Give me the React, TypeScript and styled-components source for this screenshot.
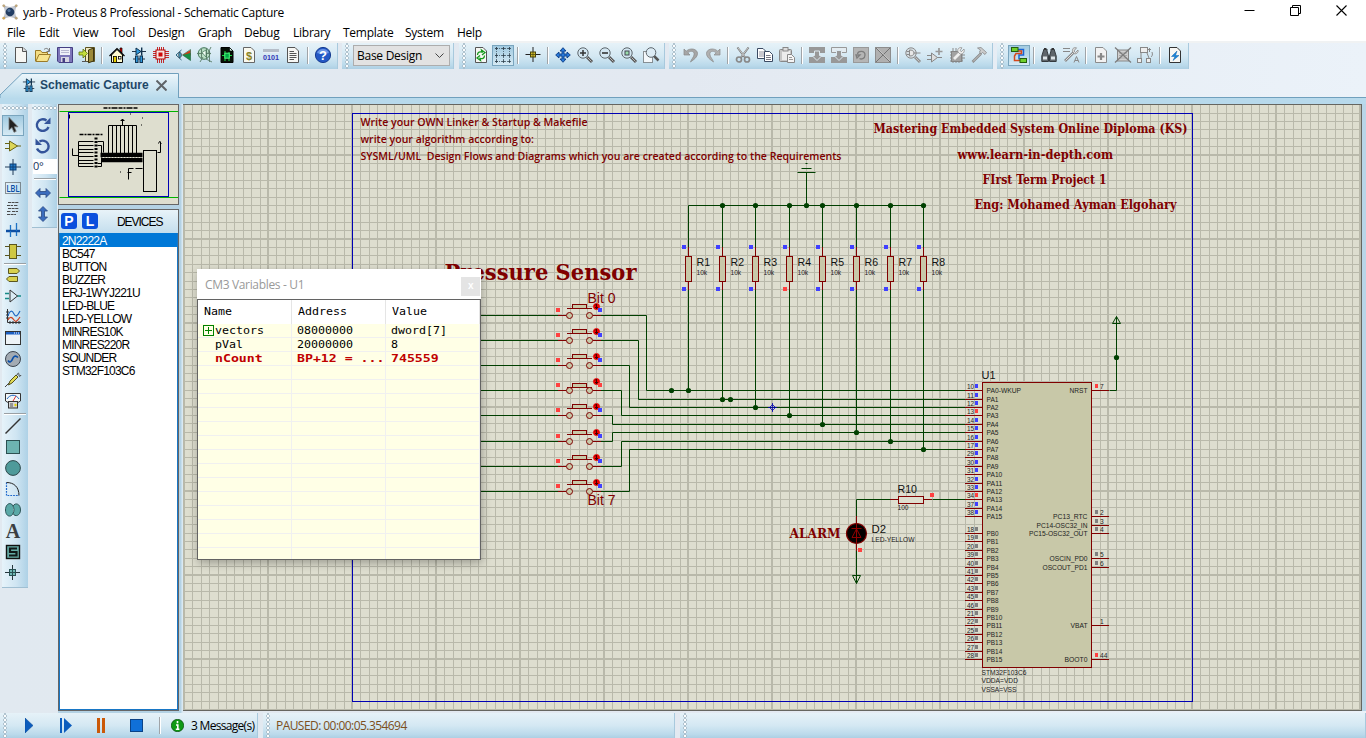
import React from 'react';
import styled, { createGlobalStyle, css } from 'styled-components';

const GlobalStyle = createGlobalStyle`
  * { box-sizing: border-box; }
  html, body { margin: 0; padding: 0; overflow: hidden; background: #fff; }
  body { font-family: "Open Sans", "Noto Sans", sans-serif; font-size: 12px; color: #000; }
  svg { display: block; }
`;

/* ---------- icons ---------- */

const lens = (extra: React.ReactNode, grey = false) => (
  <>
    <path d="M10 10L15 15" stroke={grey ? '#8f8f8f' : '#555'} strokeWidth="3" />
    <path d="M10.5 10.5L14.5 14.5" stroke={grey ? '#c4c4c4' : '#bbb'} strokeWidth="1" />
    <circle cx="6" cy="6" r="5.2" fill={grey ? '#d5dde2' : '#d3e6f1'} stroke={grey ? '#8c8c8c' : '#5d666c'} />
    {extra}
  </>
);

const page = (stroke = '#555', fill = '#f7f7f4') => (
  <path d="M2.500 .5H10L13.500 4V15.500H2.500Z" fill={fill} stroke={stroke} />
);

const ICONS: Record<string, React.ReactNode> = {
  new: <>{page()}<path d="M9.500 .5V4.500H13.500" fill="#ddd" stroke="#555" /></>,
  open: <>
    <path d="M.5 14V3.500H5.500L7 5.500H12.500V8" fill="#f3dd84" stroke="#9a7a28" />
    <path d="M.8 14.500L4 7.500H15.500L12.500 14.500Z" fill="#f7e48e" stroke="#9a7a28" />
    <path d="M9 2.500C11 .8 13 1 14 4M14.500 1V4.500H11.500" fill="none" stroke="#777" />
  </>,
  save: <>
    <path d="M.5 .5H15.500V15.500H2L.5 14Z" fill="#7d76b9" stroke="#453f83" />
    <rect x="3" y="1" width="10" height="7" fill="#eef0f8" /><path d="M4 3.500H12M4 5.500H12" stroke="#b8b8d0" />
    <rect x="4" y="10" width="8" height="5" fill="#d6d6e2" /><rect x="5.500" y="11" width="2.500" height="4" fill="#453f83" />
  </>,
  exit: <>
    <path d="M6.500 .5H15.500V14.500H6.500Z" fill="#f1e9bf" stroke="#5d5321" />
    <path d="M9.500 3L14.500 1V14L9.500 15.800Z" fill="#9b8a3a" stroke="#3e3612" />
    <path d="M0 5H4V2L8.500 6.500L4 11V8H0Z" fill="#c3dd3c" stroke="#5d7410" strokeWidth=".8" />
    <path d="M3 14.500H8" stroke="#555" />
  </>,
  home: <>
    <path d="M2.500 8V15.500H13.500V8L8 2.500Z" fill="#fffbd0" stroke="#000" />
    <path d="M11 1V4L13 6V1Z" fill="#d00" stroke="#000" strokeWidth=".7" />
    <path d="M.5 9L8 1.500L15.500 9" fill="none" stroke="#000" strokeWidth="1.200" />
    <rect x="4.500" y="9.500" width="3" height="6" fill="#e8d000" stroke="#000" strokeWidth=".8" /><rect x="9.500" y="9.500" width="2.500" height="2.500" fill="#fff" stroke="#000" strokeWidth=".8" />
  </>,
  schem: <>
    <path d="M1 4.500H15M2 12H14" stroke="#22364a" />
    <path d="M5 1L10 4.500L5 8Z" fill="#2e9ae0" stroke="#10314d" /><path d="M10.700 .5V8.500" stroke="#10314d" strokeWidth="1.400" />
    <rect x="4.500" y="9" width="2.500" height="6.500" fill="#2e9ae0" stroke="#10314d" /><rect x="9" y="9" width="2.500" height="6.500" fill="#2e9ae0" stroke="#10314d" />
  </>,
  chip: <>
    <path d="M4.500 0V16M6.500 0V16M8.500 0V16M10.500 0V16M0 4.500H16M0 6.500H16M0 8.500H16M0 10.500H16" stroke="#c01515" strokeWidth=".9" />
    <rect x="3" y="3" width="9" height="9" fill="#f4e3e0" stroke="#b00" /><rect x="5.500" y="5.500" width="4" height="4" fill="#d00808" />
  </>,
  view3d: <>
    <path d="M6.500 3L1 8L6.500 13" fill="none" stroke="#29627a" /><path d="M4.500 5C7 6 7 10 4.500 11C3.500 10 3.500 6 4.500 5" fill="#49a7c7" stroke="#223" strokeWidth=".7" />
    <path d="M7.500 8L15.500 3V8.500Z" fill="#d63a16" /><path d="M7.500 8L15.500 6V13.500Z" fill="#179046" /><path d="M7.500 8L15.500 2.500V13.500Z" fill="none" stroke="#1b5b38" strokeWidth=".6" />
  </>,
  gerber: <>
    <circle cx="7" cy="6.500" r="5.800" fill="#b8dec4" stroke="#3f7355" />
    <path d="M0 6.500H14M4.500 2V11M9.500 1V12M3 15L6 10M14 0L11 6M12.500 4V15M9 12L15 15" stroke="#587a65" fill="none" strokeWidth=".9" />
    <path d="M5 5.500L9 3V10Z" fill="#f3fff6" stroke="#3f7355" strokeWidth=".7" />
  </>,
  explorer: <>
    <path d="M2 .5H10.500L14 4V15.500H2Z" fill="#061006" stroke="#000" /><path d="M10.500 .5V4H14Z" fill="#dfe" stroke="#000" strokeWidth=".7" />
    <path d="M3 8.500H13M6 4V14M10 5V14" stroke="#15dd42" /><rect x="5.800" y="6.200" width="4.500" height="5" fill="#0a4" stroke="#4df07a" />
  </>,
  bom: <>{page('#666', '#faf9ef')}<text x="8" y="12.500" fontFamily="Liberation Sans, sans-serif" fontSize="11" fontWeight="bold" fill="#878223" textAnchor="middle">$</text></>,
  code: <>
    <rect x="0" y="2" width="16" height="3" fill="#b5bdc8" /><path d="M0 5.500H16" stroke="#e8edf4" />
    <text x="0" y="13" fontFamily="Liberation Sans, sans-serif" fontSize="7" fontWeight="bold" fill="#3535b5" textLength="16" lengthAdjust="spacingAndGlyphs">0101</text>
  </>,
  notes: <>{page()}<path d="M4.500 4.500H9M4.500 6.500H11.500M4.500 8.500H11.500M4.500 10.500H11.500M4.500 12.500H9" stroke="#555" /></>,
  help: <>
    <circle cx="8" cy="8" r="7.600" fill="#2458c5" stroke="#163c91" /><path d="M2 6A6.500 6.500 0 0 1 14 6Q8 8 2 6" fill="#6d96e6" />
    <text x="8" y="12.800" fontFamily="Liberation Sans, sans-serif" fontSize="13" fontWeight="bold" fill="#fff" textAnchor="middle">?</text>
  </>,
  refresh: <>{page()}<path d="M4.500 8C4.500 5 7 4.500 9 5L8.500 3L12 5.500L9 8M11.500 8.500C11.500 11.500 9 12 7 11.500L7.500 13.500L4 11L7 8.500" fill="none" stroke="#159a1f" strokeWidth="1.300" /></>,
  grid: (
    <>
      <path d="M1.500 0V16M8.500 0V16M14.500 0V16M0 1.500H16M0 8.500H16M0 14.500H16" stroke="#31434f" strokeDasharray="1 1" strokeWidth=".7" />
      <path d="M0 1.500H3M1.500 0V3M7 1.500H10M8.500 0V3M13 1.500H16M14.500 0V3M0 8.500H3M1.500 7V10M7 8.500H10M8.500 7V10M13 8.500H16M14.500 7V10M0 14.500H3M1.500 13V16M7 14.500H10M8.500 13V16M13 14.500H16M14.500 13V16" stroke="#31434f" strokeWidth=".8" />
    </>
  ),
  origin: <><path d="M.5 7.500H15.500M8 0V15" stroke="#222" /><rect x="5.500" y="5" width="5" height="5" fill="#d1bd2b" stroke="#4b450c" /><path d="M5.500 7.500H10.500M8 5V10" stroke="#4b450c" strokeWidth=".7" /></>,
  pan: <path d="M8 .7L11 4H9V7H12V5L15.300 8L12 11V9H9V12H11L8 15.300L5 12H7V9H4V11L.7 8L4 5V7H7V4H5Z" fill="#2878d8" stroke="#0a3c86" strokeWidth=".9" />,
  zin: lens(<path d="M3 6H9M6 3V9" stroke="#333" strokeWidth="1.500" />),
  zout: lens(<path d="M3 6H9" stroke="#333" strokeWidth="1.600" />),
  zall: lens(<rect x="4" y="4" width="4" height="4" fill="#9da" stroke="#445" />),
  zarea: <><rect x=".5" y="4.500" width="9" height="11" fill="#f4f8fb" stroke="#333" strokeDasharray="1 1" /><path d="M11 9L15.500 13.500" stroke="#555" strokeWidth="2.500" /><circle cx="8" cy="5.500" r="4.800" fill="#dcebf4" stroke="#5d666c" /></>,
  undo: <path d="M1 2V8H7L4.800 5.800C8 3 12 4.500 11 8C10.500 10.500 8.500 12 7.500 15C11 12.500 14.500 10 14.500 6.500C14.500 2 7.500 .2 3.200 4.200Z" fill="#a6a6a6" stroke="#868686" strokeWidth=".7" />,
  redo: <path d="M15 2V8H9L11.200 5.800C8 3 4 4.500 5 8C5.500 10.500 7.500 12 8.500 15C5 12.500 1.500 10 1.500 6.500C1.500 2 8.500 .2 12.800 4.200Z" fill="#b0b0b0" stroke="#8b8b8b" strokeWidth=".7" />,
  cut: <><path d="M2.500 .5L10 10.500M13.500 .5L6 10.500" stroke="#777" strokeWidth="2" /><path d="M3 1L9.500 9.500M13 1L6.500 9.500" stroke="#ddd" strokeWidth=".8" /><circle cx="4" cy="12.500" r="2.500" fill="none" stroke="#888" strokeWidth="1.700" /><circle cx="12" cy="12.500" r="2.500" fill="none" stroke="#888" strokeWidth="1.700" /></>,
  copy: <><path d="M.5 1.500H6L8.500 4V11.500H.5Z" fill="#fff" stroke="#3b4a63" /><path d="M2 5H7M2 7H7M2 9H7" stroke="#778" strokeWidth=".8" /><path d="M7.500 4.500H12.500L15.500 7.500V14.500H7.500Z" fill="#fff" stroke="#3b4a63" /><path d="M9 8.500H13.500M9 10.500H14M9 12.500H14" stroke="#556" strokeWidth=".8" /></>,
  paste: <><rect x=".5" y="2.500" width="12" height="12" rx="1" fill="#c6c6c6" stroke="#888" /><rect x="3" y="4" width="8" height="9" fill="#ececec" /><rect x="4" y=".5" width="5" height="3.500" fill="#ddd" stroke="#888" /><path d="M8.500 7.500H12.500L15.500 10.500V15.500H8.500Z" fill="#f5f5f5" stroke="#888" /><path d="M10 10.500H13M10 12.500H14" stroke="#999" /></>,
  blockCopy: <><path d="M0 0H16V6H0ZM0 10H16V16H0Z" fill="#989898" /><path d="M5.500 4V8.500H3L8 13.500L13 8.500H10.500V4Z" fill="#989898" stroke="#dde9f0" /></>,
  blockMove: <><path d="M.5 .5H15.500V5.500H.5Z" fill="#e4ecf1" stroke="#999" /><path d="M0 10H16V16H0Z" fill="#989898" /><path d="M5.500 3.500V8.500H3L8 13.500L13 8.500H10.500V3.500Z" fill="#989898" stroke="#dde9f0" /></>,
  blockRotate: <><rect x=".5" y=".5" width="15" height="15" fill="#b5b5b5" stroke="#999" /><path d="M3 8H7L4 11ZM4.500 7C5 3.500 12 3 12 8C12 12 8 12.500 6.500 11.500" fill="none" stroke="#7d7d7d" strokeWidth="1.300" /></>,
  blockDelete: <><rect x=".5" y=".5" width="15" height="15" fill="#b0b0b0" stroke="#8d8d8d" /><path d="M1 1L15 15M15 1L1 15" stroke="#737373" /><path d="M2 1L15 14" stroke="#ddd" strokeWidth=".5" /></>,
  pick: lens(<><path d="M1.500 4.500H5M1.500 7.500H5M9 6H15.500" stroke="#8a8a8a" /><path d="M4.500 3V9C7 9 9 8 9 6S7 3 4.500 3Z" fill="#e8e8e8" stroke="#8a8a8a" /></>, true),
  makeDev: <><path d="M0 8.500H4M0 12.500H4M10 10.500H15" stroke="#888" /><path d="M4.500 6V15L10.500 10.500Z" fill="#ddd" stroke="#888" /><path d="M12 1V8M8.500 4.500H15.500" stroke="#999" strokeWidth="1.700" /></>,
  packTool: <><path d="M4 1V16M7 1V16M10 5V16M13 5V14M1 5H14M1 8H16M1 11H16M1 14H14" stroke="#8a8a8a" /><rect x="2.500" y="4.500" width="10" height="10" fill="#a2a2a2" stroke="#858585" /><path d="M5 12L12 5" stroke="#eee" strokeWidth="2.800" /><path d="M15 2L12.500 4.500L11 3.500L13 .8C10 0 8 2 9 5L11 7C14 7.500 16 5 15 2Z" fill="#eee" stroke="#888" strokeWidth=".7" /></>,
  hammer: <><path d="M1.500 15L10 6.500" stroke="#888" strokeWidth="2.500" /><path d="M2 14.500L9.500 7" stroke="#ddd" strokeWidth=".8" /><path d="M6.500 1L10 .5L15.500 5.500L14 7.500L11.500 5.500L10 7L8.500 5L9.500 3Z" fill="#ccc" stroke="#888" strokeWidth=".8" /></>,
  autoroute: <>
    <path d="M7 2.500H12.500V8H8V12.500" fill="none" stroke="#1965d6" strokeWidth="1.500" /><path d="M7 4H10.500V6.500H5L3.500 9V13.500H9" fill="none" stroke="#d6471a" strokeWidth="1.500" />
    <rect x=".5" y=".5" width="6.500" height="4" fill="#6fd02c" stroke="#235c0c" /><rect x="9" y="11.500" width="6.500" height="4" fill="#6fd02c" stroke="#235c0c" />
  </>,
  find: <><path d="M3 2H6V4L7.500 9V14.500H.8V9ZM13 2H10V4L8.500 9V14.500H15.200V9Z" fill="#5f666b" stroke="#343a3e" /><path d="M2 11H6M10 11H14" stroke="#dce4e8" strokeWidth="3" /><path d="M4 1V3M12 1V3" stroke="#333" strokeWidth="2" /></>,
  property: <><path d="M0 1.500H7M0 4.500H7" stroke="#888" /><path d="M2 14L11 5" stroke="#888" strokeWidth="2.600" /><path d="M2.500 13.500L11 5" stroke="#e8e8e8" strokeWidth=".9" /><path d="M15 3L12.500 5.500L11 4L13.500 .8C10.500 0 9 2 9.500 4.500L11.500 7C14 7 15.800 5 15 3Z" fill="#ddd" stroke="#888" strokeWidth=".8" /><path d="M11 15.500L13.500 9.500L16 15.500M12 13.500H15.200" fill="none" stroke="#888" /></>,
  addSheet: <>{page('#8b8b8b', '#f2f2f2')}<path d="M8 6V13M4.500 9.500H11.500" stroke="#888" strokeWidth="2.200" /></>,
  removeSheet: <><rect x="2.500" y="3" width="11" height="11" fill="#cfcfcf" stroke="#888" /><path d="M4 6H12M4 8.500H12M4 11H12" stroke="#aaa" /><path d="M0 .5L16 15.500M16 .5L0 15.500" stroke="#7d7d7d" strokeWidth="1.300" /></>,
  childSheet: <><path d="M4 5V11M10 6L12 11" stroke="#888" /><rect x="3.500" y=".5" width="7" height="5" fill="#eee" stroke="#888" /><rect x=".5" y="11.500" width="4" height="4" fill="#eee" stroke="#888" /><rect x="9.500" y="11.500" width="4" height="4" fill="#eee" stroke="#888" /><path d="M11 2.500H14M12.500 1V5M15 5C16 8 15 9 14 10" stroke="#888" fill="none" /></>,
  erc: <>{page('#333')}<path d="M10 4L4.500 9.500H8L6 13.500L12 8.500H8.500Z" fill="#1685dd" stroke="#1464a8" strokeWidth=".5" /></>,
  arrow: <path d="M4 .5V13L7 10.500L9 15.300L11.200 14.300L9.200 9.800H13Z" fill="#222" stroke="#777" strokeWidth=".8" />,
  gate: <><path d="M0 5.500H5M0 10.500H5M12 8H16" stroke="#6a6517" /><path d="M4.500 3V13L12.500 8Z" fill="#ddd657" stroke="#6a6517" /></>,
  junction: <><path d="M8 0V16M0 8H16" stroke="#223c58" /><rect x="5" y="5" width="6" height="6" fill="#237dcc" stroke="#0c3e75" /><path d="M8 5V11M5 8H11" stroke="#0c3e75" /></>,
  lbl: <><rect x=".5" y="2.500" width="15" height="11" fill="none" stroke="#333" strokeDasharray="1 1" /><text x="1.500" y="11.800" fontSize="9.500" fontFamily="Roboto, sans-serif" fontWeight="500" fill="#0a4ea5" textLength="13" lengthAdjust="spacingAndGlyphs">LBL</text></>,
  script: <path d="M3 1.500H14M2 4.500H8M9 4.500H13M3 7.500H14M2 10.500H6M7 10.500H13M2 13.500H11" stroke="#4b4b4b" strokeDasharray="3 .6" />,
  bus: <><path d="M1 9H15" stroke="#0d4fa3" strokeWidth="2.500" /><path d="M5.500 9V15M5.500 3V8M11.500 1V9M11.500 10V14" stroke="#1d72c4" strokeWidth="1.300" /></>,
  subckt: <><path d="M0 3.500H5M0 12.500H5M11 3.500H16M11 12.500H16" stroke="#5a5620" /><rect x="4.500" y="1.500" width="7" height="14" fill="#cfc843" stroke="#5a5620" /></>,
  terminal: <><path d="M3.500 1.500H12L14.500 4L12 6.500H3.500Z" fill="#d8d14c" stroke="#5a5620" /><path d="M12.500 9.500H4L1.500 12L4 14.500H12.500Z" fill="#d8d14c" stroke="#5a5620" /></>,
  pin: <><path d="M0 5.500H4M0 10.500H4M12 8H16" stroke="#178a86" strokeWidth="1.400" /><path d="M5 2V14L12.500 8Z" fill="#dcecf5" stroke="#333" /></>,
  graph: <><path d="M2.500 0V13.500H16M1 3H4M1 6H4M1 9H4M5 12V15M8 12V15M11 12V15M14 12V15" stroke="#333" fill="none" /><path d="M3 7C5 1 7 1 9 5S13 6 15 2" stroke="#1f68c2" fill="none" strokeWidth="1.200" /><path d="M3 11C5 7 7 8 9 11S13 11 15 8" stroke="#d0401c" fill="none" strokeWidth="1.200" /></>,
  popup: <><rect x=".5" y="1.500" width="15" height="13" fill="#eef3f6" stroke="#333" /><rect x="1" y="2" width="14" height="2.500" fill="#1c5fc2" /><path d="M9 3H10M11 3H12M13 3H14" stroke="#fff" /></>,
  generator: <><circle cx="8" cy="8" r="7.500" fill="#a3abb3" stroke="#3d4650" /><path d="M3 9.500C4.500 12 6.500 11 7.500 8S10.500 4 13 6.500" fill="none" stroke="#0a4fa8" strokeWidth="1.700" /></>,
  probe: <><path d="M0 15L4 11M12 3C13 0 14 1 14 3S15 5 16 3" fill="none" stroke="#444" /><path d="M3.500 13L5 9L11 3L13 5L7 11Z" fill="#e2db55" stroke="#55511c" /></>,
  meter: <><path d="M.5 .5H15.500V8L12 10H4L.5 8Z" fill="#f2f6f8" stroke="#333" /><path d="M2 6C5 1 11 1 14 6" fill="none" stroke="#1f68c2" /><path d="M8 8L11 3" stroke="#d33" /><rect x="3.500" y="8.500" width="9" height="6.500" fill="#d6d6d6" stroke="#333" /><circle cx="10.500" cy="12" r="1.200" fill="#e5d400" /><path d="M5 11H8M5 13H8" stroke="#555" /></>,
  line: <path d="M.5 15.500L15.500 .5" stroke="#333" strokeWidth="1.500" />,
  box: <rect x="1.500" y="1.500" width="13" height="13" fill="#6db3b1" stroke="#2c5052" />,
  circle: <circle cx="8" cy="8" r="7.400" fill="#4e9a9a" stroke="#2f4a4c" />,
  arc: <><path d="M1.500 1.500V14.500H14" fill="none" stroke="#1e68cb" strokeDasharray="1.800 1" strokeWidth="1.200" /><path d="M1.500 1.500C9 1.500 14 6 14 14.500" fill="none" stroke="#222" /></>,
  path: <path d="M8 4C6 -.5 .5 1.500 .5 8C.5 14.500 6 16 8 11.500C10 15.500 15.500 13.500 15.500 8C15.500 2 10.500 0 8 4C9.300 6 9.300 9.500 8 11.500" fill="#5ba9a7" stroke="#2f5557" />,
  text: <text x="8" y="14.500" fontFamily="Liberation Serif, serif" fontWeight="bold" fontSize="20" textAnchor="middle" fill="#3a3f42">A</text>,
  symbol: <><rect x="1.500" y="1.500" width="13" height="13" fill="#64aaa5" stroke="#111" strokeWidth="1.400" /><path d="M12 4.500H5V8H11.500V11.500H4" fill="none" stroke="#101818" strokeWidth="2.200" /></>,
  marker: <><path d="M7.500 0V15M0 7.500H15" stroke="#26363c" /><rect x="4.500" y="4.500" width="6" height="6" fill="#6fb9b5" stroke="#285052" /><path d="M7.500 4.500V10.500M4.500 7.500H10.500" stroke="#285052" /></>,
  cw: <><path d="M13.500 10A6 5.800 0 1 1 11.500 3.500" fill="none" stroke="#34549a" strokeWidth="2.400" /><path d="M15.500 .5V7H9Z" fill="#34549a" /></>,
  ccw: <><path d="M2 10.500A6 5.800 0 1 0 4.500 3.500" fill="none" stroke="#34549a" strokeWidth="2.400" /><path d="M.5 .5V7H7Z" fill="#34549a" /></>,
  flipH: <path d="M.5 8L5 3.500V6.500H11V3.500L15.500 8L11 12.500V9.500H5V12.500Z" fill="#3a6cbd" stroke="#2a4780" strokeWidth=".8" />,
  flipV: <path d="M8 .5L3.500 5H6.500V11H3.500L8 15.500L12.500 11H9.500V5H12.500Z" fill="#3a6cbd" stroke="#2a4780" strokeWidth=".8" />,
};

const Icon = ({ name, size = 16 }: { name: string; size?: number }) => (
  <svg width={size} height={size} viewBox="0 0 16 16" overflow="visible">{ICONS[name]}</svg>
);

/* ---------- frame ---------- */

const Frame = styled.div`
  width: 1366px;
  height: 738px;
  display: flex;
  flex-direction: column;
  background: linear-gradient(90deg, #e1e9f0, #e3e9f1 50%, #ebf2f9);
`;

const TitleBar = styled.header`
  height: 23px;
  display: flex;
  align-items: center;
  padding-left: 2px;
  background: #fff;
`;
const TitleText = styled.span`
  margin-left: 5px;
  padding-top: 1px;
  flex: 1;
  letter-spacing: -0.3px;
  white-space: pre;
`;
const WindowButtons = styled.div`
  display: flex;
  gap: 35px;
  padding-right: 19px;
  padding-bottom: 2px;
`;

const MenuBar = styled.nav`
  height: 20px;
  display: flex;
  padding-left: 7px;
  line-height: 19px;
  background: #fff;
  border-bottom: 2px solid #f0f2f3;
`;
const MenuItem = styled.span<{ $w: number }>`
  width: ${p => p.$w}px;
  letter-spacing: -0.25px;
`;

const toolbarFill = 'linear-gradient(#e6f2f8, #d4e8f3 50%, #bbdaeb 85%, #adcfe3)';

const ToolbarRow = styled.div`
  height: 26px;
  display: flex;
`;
const ToolGroup = styled.div<{ $w: number; $gap: number; $pad: number }>`
  width: ${p => p.$w}px;
  margin-right: ${p => p.$gap}px;
  padding-left: ${p => p.$pad}px;
  padding-bottom: 1px;
  display: flex;
  align-items: center;
  background:
    radial-gradient(circle at 2px 2px, #fbfdfe 1px, #a9bcc8 1.5px, transparent 2px) 3px 1px / 4px 4px repeat-y,
    ${toolbarFill};
  border-right: 1px solid #a8c9dd;
`;
const ToolButton = styled.span<{ $on?: boolean }>`
  width: 22px;
  height: 21px;
  flex: none;
  display: flex;
  align-items: center;
  justify-content: center;
  padding-bottom: 1px;
  ${p => p.$on && css`
    background: linear-gradient(#9fc9e0, #d8ebf5);
    box-shadow: inset 0 0 0 1px #7aa5be;
  `}
`;
const Divider = styled.span`
  width: 8px;
  height: 17px;
  flex: none;
  display: flex;
  justify-content: center;
  &::after { content: ''; width: 2px; background: linear-gradient(90deg, #a0a4a8 50%, #fff 50%); }
`;
const DesignSelect = styled.div`
  width: 97px;
  height: 21px;
  padding: 0 5px 0 3px;
  display: flex;
  align-items: center;
  justify-content: space-between;
  background: #e2e2e2;
  border: 1px solid #adadad;
  letter-spacing: -0.27px;
`;

const TabRow = styled.div`
  height: 29px;
  flex: none;
  display: flex;
  align-items: flex-end;
`;
const TabFill = styled.div`
  flex: 1;
  height: 1px;
  background: #70a0bd;
`;
const Tab = styled.div`
  width: 179px;
  height: 25px;
  flex: none;
  position: relative;
  z-index: 0;
  display: flex;
  align-items: center;
  padding-left: 22px;
  padding-bottom: 1px;
`;
const TabName = styled.span`
  width: 116px;
  margin-left: 4px;
  color: #1f4768;
  font: bold 12px "Liberation Sans", Arial, sans-serif;
  white-space: nowrap;
`;
const TabShape = styled.svg`
  position: absolute;
  left: 0;
  top: 0;
  z-index: -1;
`;
const Strip = styled.div`
  height: 6px;
  flex: none;
  background: #b8daec;
`;

/* ---------- workspace ---------- */

const Workspace = styled.main`
  height: 609px;
  display: flex;
  align-items: flex-start;
`;
const VerticalTools = styled.aside<{ $h: number; $w: number; $ml: number }>`
  width: ${p => p.$w}px;
  height: ${p => p.$h}px;
  margin-left: ${p => p.$ml}px;
  flex: none;
  padding-top: 11px;
  background:
    radial-gradient(circle at 2px 2px, #fbfdfe 1px, #a9bcc8 1.5px, transparent 2px) 1px 2px / 4px 4px repeat-x,
    linear-gradient(90deg, #e6f3fa, #cfe5f2 55%, #aed1e6);
  border-bottom: 1px solid #a0bfd2;
`;
const VDivider = styled.div<{ $h: number }>`
  height: ${p => p.$h}px;
  width: 22px;
  margin-left: 2px;
  display: flex;
  align-items: center;
  &::after { content: ''; flex: 1; height: 2px; background: linear-gradient(#9aa0a4 50%, #fff 50%); }
`;
const AngleField = styled.div`
  width: 24px;
  height: 15px;
  margin: 2px 0 0 1px;
  background: #fff;
  color: #16345e;
  font-size: 11px;
  line-height: 13px;
  letter-spacing: -0.3px;
`;
const PanelColumn = styled.section`
  width: 125px;
  height: 609px;
  flex: none;
  padding-right: 4px;
  padding-bottom: 2px;
  margin-left: 1px;
  display: flex;
  flex-direction: column;
  gap: 4px;
  background: linear-gradient(90deg, #b4d2e4 98%, #e3eff6);
`;
const Overview = styled.div`
  height: 101px;
  border: 1px solid #666;
  background: #dedecf;
`;
const Devices = styled.div`
  flex: 1;
  border: 1px solid #666;
  display: flex;
  flex-direction: column;
`;
const DevicesHead = styled.div`
  height: 23px;
  display: flex;
  align-items: center;
  padding: 0 0 1px 2px;
  gap: 5px;
  background: linear-gradient(#e8f3f9, #c4deed);
`;
const LetterButton = styled.span`
  width: 16px;
  height: 16px;
  border-radius: 3px;
  background: #0a4fdd;
  color: #fff;
  font: bold 14px/16px "Liberation Sans", Arial, sans-serif;
  text-align: center;
`;
const DevicesTitle = styled.span`
  margin-left: 14px;
  padding-top: 1px;
  font: 12px "Liberation Sans", Arial, sans-serif;
  letter-spacing: -1.05px;
`;
const DeviceList = styled.div`
  flex: 1;
  padding-top: 1px;
  background: #fff;
  border: 1px solid #1877c6;
  border-top: 0;
  font: 12px/13px "Liberation Sans", Arial, sans-serif;
  letter-spacing: -0.8px;
`;
const Device = styled.div<{ $on: boolean }>`
  height: 13px;
  padding: 1px 0 0 2px;
  white-space: nowrap;
  ${p => p.$on && css`background: #0078d7; color: #fff; box-shadow: 0 -1px #0078d7;`}
`;
const CanvasArea = styled.section`
  width: 1179px;
  height: 607px;
  flex: none;
  position: relative;
`;
const RightEdge = styled.div`
  flex: 1;
  height: 607px;
  background: #b8d6e8;
`;

/* ---------- variables window ---------- */

const VarWindow = styled.div`
  position: absolute;
  left: 14px;
  top: 165px;
  width: 284px;
  height: 291px;
  display: flex;
  flex-direction: column;
  box-shadow: 1px 3px 9px rgba(0, 0, 0, 0.3);
`;
const VarTitle = styled.div`
  height: 30px;
  padding: 0 1px 0 8px;
  display: flex;
  align-items: center;
  justify-content: space-between;
  background: #fff;
  color: #999;
  letter-spacing: -0.34px;
`;
const VarClose = styled.span`
  width: 19px;
  height: 19px;
  margin-top: 4px;
  background: #e4e4e4;
  color: #fff;
  font: bold 10px/17px "Liberation Sans", Arial, sans-serif;
  text-align: center;
`;
const VarTable = styled.div`
  flex: 1;
  border: 1px solid #636363;
  overflow: hidden;
  background: #ffffe6;
  font-family: "DejaVu Sans Mono", monospace;
  font-size: 10px;
`;
const VarHead = styled.div`
  height: 24px;
  display: grid;
  grid-template-columns: 94px 94px 94px;
  background: #fff;
  line-height: 23px;
`;
const VarHeadCell = styled.span`
  padding-left: 6px;
  border-right: 1px solid #e5e5e5;
`;
const VarRow = styled.div<{ $changed?: boolean }>`
  height: 14px;
  display: grid;
  grid-template-columns: 94px 94px 94px;
  line-height: 13px;
  border-bottom: 1px solid #f0f0f0;
  color: ${p => (p.$changed ? '#c00000' : '#000')};
  font-weight: ${p => (p.$changed ? 'bold' : 'normal')};
`;
const VarCell = styled.span<{ $first?: boolean }>`
  display: flex;
  align-items: center;
  padding-left: ${p => (p.$first ? 17 : 5)}px;
  border-right: 1px solid #f0f0f0;
`;
const Wide = styled.span<{ $by: number }>`
  display: inline-block;
  white-space: pre;
  transform: scaleX(${p => p.$by});
  transform-origin: 0 50%;
`;
const Expand = styled.i`
  width: 11px;
  height: 11px;
  margin: 0 1px 0 -12px;
  border: 1px solid #008000;
  background: linear-gradient(#008000, #008000) center / 7px 1px no-repeat, linear-gradient(#008000, #008000) center / 1px 7px no-repeat;
`;

/* ---------- status bar ---------- */

const StatusBar = styled.footer`
  height: 25px;
  display: flex;
`;
const StatusSlot = styled.span<{ $w: number }>`
  width: ${p => p.$w}px;
  flex: none;
  display: flex;
  justify-content: center;
`;
const StatusText = styled.span<{ $c?: string; $ls: number }>`
  color: ${p => p.$c || '#000'};
  padding-top: 1px;
  white-space: nowrap;
  letter-spacing: ${p => p.$ls}px;
`;

/* ---------- schematic ---------- */

const WIRE = '#004000';
const DARK = '#800000';
const HIGH = '#ff4040';
const LOW = '#4040ff';
const IDLE = '#808080';

type LabelProps = { x: number; y: number; size: number; w?: number; color?: string; bold?: boolean; family?: string; children: string };
const SANS = '"Liberation Sans", Arial, sans-serif';
const SLAB = '"DejaVu Serif", serif';
const Label = ({ x, y, size, w, color = '#222', bold, family = SANS, children }: LabelProps) => (
  <text x={x} y={y} fontSize={size} fill={color} fontFamily={family} fontWeight={bold ? 700 : 400}
    textLength={w} lengthAdjust={w ? 'spacingAndGlyphs' : undefined} xmlSpace="preserve">{children}</text>
);

const Grid = () => {
  const lines: React.ReactNode[] = [];
  for (let i = 0; i <= 141; i++) {
    const x = Math.round(184 + i * 8.4);
    const major = i % 10 === 0;
    if (x <= 1360) lines.push(<rect key={`v${i}`} x={major ? x - 1 : x} y={105} width={major ? 2 : 1} height={605} />);
  }
  for (let i = -5; i <= 66; i++) {
    const y = Math.round(154.6 + i * 8.4);
    const major = i % 10 === 0;
    if (y > 105 && y <= 709) lines.push(<rect key={`h${i}`} x={184} y={major ? y - 1 : y} width={1177} height={major ? 2 : 1} />);
  }
  return <g fill="#b9b9aa">{lines}</g>;
};

const pinRow = (i: number) => Math.floor(390.6 + 8.4 * i);
const PA_NUMS = [10, 11, 12, 13, 14, 15, 16, 17, 29, 30, 31, 32, 33, 34, 37, 38];
const PB_NUMS = [18, 19, 20, 39, 40, 41, 42, 43, 45, 46, 21, 22, 25, 26, 27, 28];
const RIGHT_PINS: [number, string, string, string | null, number][] = [
  [390, 'NRST', '7', HIGH, 18], [516, 'PC13_RTC', '2', IDLE, 34.5], [525, 'PC14-OSC32_IN', '3', IDLE, 51], [533, 'PC15-OSC32_OUT', '4', IDLE, 58.5],
  [558, 'OSCIN_PD0', '5', IDLE, 38], [567, 'OSCOUT_PD1', '6', IDLE, 45], [625, 'VBAT', '1', null, 17], [659, 'BOOT0', '44', HIGH, 23],
];
const RES_X = [688, 722, 755, 789, 822, 856, 890, 923];
const BUTTONS: [number, number, number][] = [[315, 646, 390], [340, 638, 399], [365, 629, 407], [390, 621, 415], [415, 612, 424], [441, 612, 432], [466, 621, 441], [491, 629, 449]];

const Chip = () => (
  <g>
    <rect x={982.5} y={382.5} width={109} height={285} fill="#c8c8a8" stroke={DARK} />
    {[...PA_NUMS.map((n, i) => ({ n, i, name: i ? `PA${i}` : 'PA0-WKUP', c: i === 3 || i === 13 ? HIGH : LOW })),
      ...PB_NUMS.map((n, i) => ({ n, i: i + 17, name: `PB${i}`, c: IDLE }))].map(p => {
      const y = pinRow(p.i);
      return (
        <g key={p.name}>
          <rect x={965} y={y} width={17} height={1} fill={DARK} />
          <rect x={975} y={y - 6} width={3} height={4} fill={p.c} />
          <Label x={967} y={y - 1} size={6.6} w={7.2}>{String(p.n)}</Label>
          <Label x={986.5} y={y + 3} size={6.6} w={p.i ? (p.name.length === 3 ? 12 : 15.8) : 34.5}>{p.name}</Label>
        </g>
      );
    })}
    {RIGHT_PINS.map(([y, name, num, c, w]) => (
      <g key={name}>
        <rect x={1092} y={y} width={17} height={1} fill={DARK} />
        {c && <rect x={1095} y={y - 6} width={3} height={4} fill={c} />}
        <Label x={1100} y={y - 1} size={6.6}>{num}</Label>
        <Label x={1087.5 - w} y={y + 3} size={6.6} w={w}>{name}</Label>
      </g>
    ))}
    <Label x={981.5} y={379} size={11.5} w={14} color="#111">U1</Label>
    <Label x={981.5} y={675} size={6.6} w={45}>STM32F103C6</Label>
    <Label x={981.5} y={683} size={6.6} w={36.5}>VDDA=VDD</Label>
    <Label x={981.5} y={691.5} size={6.6} w={35}>VSSA=VSS</Label>
  </g>
);

const Resistor = ({ x, n }: { x: number; n: number }) => (
  <g>
    <path d={`M${x + 0.5} 247V290`} stroke={DARK} />
    <rect x={x - 2.5} y={256.5} width={6} height={25} fill="#c8c8a8" stroke={DARK} />
    <rect x={x - 6} y={245} width={4} height={4} fill={LOW} />
    <rect x={x - 6} y={287} width={4} height={4} fill={n === 4 ? HIGH : LOW} />
    <Label x={x + 8.5} y={266} size={11} w={13.5} color="#111">{`R${n}`}</Label>
    <Label x={x + 8.5} y={275} size={7} w={10.7}>10k</Label>
  </g>
);

const PushButton = ({ y, pressed }: { y: number; pressed: boolean }) => {
  const bar = pressed ? y - 3 : y - 7;
  return (
    <g stroke={DARK}>
      <path d={`M558 ${y + 0.5}H566M593 ${y + 0.5}H601M567 ${bar + 0.5}H592`} />
      <rect x={572.5} y={bar - 3.5} width={14} height={4} fill="#c8c8a8" />
      <circle cx={569.5} cy={y + 0.5} r={3} fill="#c8c8a8" />
      <circle cx={589.5} cy={y + 0.5} r={3} fill="#c8c8a8" />
      <circle cx={596.5} cy={y - 8.5} r={3.1} fill="#f00000" stroke="#e00000" strokeWidth=".7" />
      <path d={`M596.5 ${y - 11}V${y - 6}M595 ${y - 9.5}L596.5 ${y - 11}M595 ${y - 7.5}L598 ${y - 7.5}`} stroke="#400" />
      <rect x={556} y={y - 7} width={4} height={4} fill={HIGH} stroke="none" />
      <rect x={598} y={y - 7} width={4} height={4} fill={pressed ? HIGH : LOW} stroke="none" />
    </g>
  );
};

const Dot = ({ x, y }: { x: number; y: number }) => <circle cx={x + 0.5} cy={y + 0.5} r={2.6} fill={WIRE} />;

const Schematic = () => (
  <svg width="1179" height="607" viewBox="183 104 1179 607">
    <rect x="183.5" y="104.5" width="1178" height="606" fill="#dedecf" stroke="#666660" />
    <Grid />
    <rect x="352.5" y="113.5" width="840" height="588" fill="none" stroke="#0000b4" />
    <g transform="translate(.5 .5)" stroke={WIRE} fill="none">
      <path d="M688 390V205H923V449M806 205V172M797 172H815M801 168H811M805 163H807" />
      {RES_X.slice(1, 7).map((x, i) => <path key={x} d={`M${x} 205V${pinRow(i + 1)}`} />)}
      {BUTTONS.map(([y, x, to]) => <path key={y} d={`M480 ${y}H558M600 ${y}H${x}V${to}H965`} />)}
      <path d="M1109 390H1116V316M1112 323L1116 316L1120 323Z" />
      <path d="M965 499H932M890 499H856V516M856 550V583M852 575H860L856 583Z" />
    </g>
    {RES_X.map((x, i) => <Resistor key={x} x={x} n={i + 1} />)}
    {RES_X.slice(1).map(x => <Dot key={x} x={x} y={205} />)}
    {RES_X.map((x, i) => <Dot key={x} x={x} y={pinRow(i)} />)}
    <Dot x={806} y={205} /><Dot x={671} y={390} /><Dot x={730} y={399} /><Dot x={1116} y={357} />
    <path d="M772.5 403V412M768 407.5H777M769.5 407.5L772.5 404.5L775.5 407.5L772.5 410.5Z" stroke="#0000b4" strokeWidth=".8" fill="none" />
    {BUTTONS.map(([y], i) => <PushButton key={y} y={y} pressed={i === 3} />)}
    <Chip />
    <path d="M890 499.5H898M924 499.5H932M856.5 516V524M856.5 544V551" stroke={DARK} />
    <rect x="898.5" y="496.5" width="25" height="7" fill="#dedecf" stroke={DARK} />
    <rect x="930" y="493" width="4" height="4" fill={HIGH} />
    <rect x="858" y="548" width="4" height="4" fill={HIGH} />
    <circle cx="856.5" cy="533.5" r="10" fill="#050000" stroke={DARK} strokeWidth="1.2" />
    <path d="M856.5 524V543M851.5 528.5H861.5M852 537.5H861L856.5 529Z" fill="none" stroke="#900000" />
    <Label x={897.5} y={493} size={11} w={19.5} color="#111">R10</Label>
    <Label x={897.5} y={509.5} size={7} w={11}>100</Label>
    <Label x={871.5} y={533} size={11} w={14.5} color="#111">D2</Label>
    <Label x={871.5} y={542} size={7} w={43}>LED-YELLOW</Label>
    <Label x={789.5} y={537.5} size={12} w={51} bold color={DARK} family={SLAB}>ALARM</Label>
    <Label x={444.5} y={279.5} size={21.5} w={192} bold color={DARK} family={SLAB}>Pressure Sensor</Label>
    <Label x={587.5} y={303} size={14} w={28} color={DARK}>Bit 0</Label>
    <Label x={587.5} y={505} size={14} w={28} color={DARK}>Bit 7</Label>
    <Label x={873.5} y={133} size={12} w={314} bold color={DARK} family={SLAB}>Mastering Embedded System Online Diploma (KS)</Label>
    <Label x={957.5} y={159} size={12} w={155.5} bold color={DARK} family={SLAB}>www.learn-in-depth.com</Label>
    <Label x={982.5} y={184} size={12} w={124} bold color={DARK} family={SLAB}>FIrst Term Project 1</Label>
    <Label x={974.5} y={209} size={12} w={202} bold color={DARK} family={SLAB}>Eng: Mohamed Ayman Elgohary</Label>
    <g fontWeight="600" fill={DARK} fontFamily='"Open Sans", "Noto Sans", sans-serif' fontSize="11.5">
      <text x="360.5" y="126" textLength="227" lengthAdjust="spacingAndGlyphs">Write your OWN Linker &amp; Startup &amp; Makefile</text>
      <text x="360.5" y="143" textLength="173.5" lengthAdjust="spacingAndGlyphs">write your algorithm according to:</text>
      <text x="360.5" y="160" textLength="481" lengthAdjust="spacingAndGlyphs">SYSML/UML{'\u00a0\u00a0'}Design Flows and Diagrams which you are created according to the Requirements</text>
    </g>
  </svg>
);

const MiniMap = () => (
  <svg width="119" height="99" viewBox="59 105 119 99">
    <g transform="translate(.5 .5)" fill="none">
      <path d="M59 111H178M59 197H178" stroke="#00b400" />
      <rect x="68" y="112" width="100" height="84" stroke="#0000b4" />
      <path d="M103 107.5H137" stroke="#000" strokeWidth="1.5" strokeDasharray="4 1 2 1 6 1" />
      <path d="M79 134H103" stroke="#000" strokeWidth="1.5" strokeDasharray="4 1 2 1" />
      <g stroke="#000">
        <path d="M108 125H136V154M108 125V154M112 125V154M116 125V154M120 125V154M124 125V154M128 125V154M132 125V154M122 119V125M120 120H124M121 119H123" />
        <path d="M78 141V166M78 141H93M78 145H93M78 149H93M78 152H93M78 156H93M78 160H93M78 163H93M78 166H93M72 148V155H78" />
        <path d="M97 141H103V152M97 145H101V153M97 163H101V157M97 166H101V158" />
        <path d="M157 152H160V141M158 143L159 141L161 143M128 179V168M128 168H133M135 168H142M127 172H131" />
        <path d="M95.5 137V168" strokeWidth="3" strokeDasharray="2 1.5" />
        <path d="M130 113V114M142 117V118M141 124V125M69 114V118M120 171V172" />
      </g>
      <path d="M100 154.5H142M101 159.500H142" stroke="#000" strokeWidth="4.5" />
      <path d="M102 157H142" stroke="#dedecf" strokeDasharray="2 1" />
      <rect x="143" y="150" width="13" height="41" stroke="#000" />
    </g>
  </svg>
);

/* ---------- data ---------- */

const MENU: [string, number][] = [['File', 32], ['Edit', 34], ['View', 39], ['Tool', 36], ['Design', 50], ['Graph', 46], ['Debug', 49], ['Library', 50], ['Template', 62], ['System', 52], ['Help', 40]];
const TOP_TOOLS = {
  project: ['new', 'open', 'save', 'exit', '|', 'home', 'schem', 'chip', 'view3d', 'gerber', 'explorer', 'bom', 'code', 'notes', '|', 'help'],
  view: ['refresh', 'grid*', '|', 'origin', '|', 'pan', 'zin', 'zout', 'zall', 'zarea'],
  edit: ['undo', 'redo', '|', 'cut', 'copy', 'paste', '|', 'blockCopy', 'blockMove', 'blockRotate', 'blockDelete', '|', 'pick', 'makeDev', 'packTool', 'hammer'],
  design: ['autoroute*', '|', 'find', 'property', '|', 'addSheet', 'removeSheet', 'childSheet', '|', 'erc'],
};
const MODES = ['arrow*', 'gate', 'junction', 'lbl', 'script', 'bus', 'subckt', '|', 'terminal', 'pin', 'graph', 'popup', 'generator', 'probe', 'meter', '|', 'line', 'box', 'circle', 'arc', 'path', 'text', 'symbol', 'marker'];
const DEVICES = ['2N2222A', 'BC547', 'BUTTON', 'BUZZER', 'ERJ-1WYJ221U', 'LED-BLUE', 'LED-YELLOW', 'MINRES10K', 'MINRES220R', 'SOUNDER', 'STM32F103C6'];
const VARS = [['vectors', '08000000', 'dword[7]'], ['pVal', '20000000', '8'], ['nCount', 'BP+12 = ...', '745559']];

const Tools = ({ items, vertical }: { items: string[]; vertical?: boolean }) => (
  <>
    {items.map((t, i) => {
      if (t === '|') return vertical ? <VDivider key={i} $h={i > 10 ? 4 : 3} /> : <Divider key={i} />;
      return <ToolButton key={i} $on={t.endsWith('*')}><Icon name={t.replace('*', '')} /></ToolButton>;
    })}
  </>
);

export default function App() {
  return (
    <Frame>
      <GlobalStyle />
      <TitleBar>
        <svg width="16" height="16" viewBox="0 0 16 16">
          <path d="M1 1L15 15M15 1L1 15" stroke="#a5a5ad" strokeWidth="1.5" />
          <path d="M2 2Q8 5 14 2Q11 8 14 14Q8 11 2 14Q5 8 2 2Z" fill="#c3c8d1" stroke="#9da3ae" strokeWidth=".6" />
          <circle cx="8" cy="8" r="4.300" fill="#233e63" /><circle cx="7" cy="6.500" r="1.600" fill="#54759e" />
          <circle cx="1.800" cy="1.800" r="1.400" fill="#bfa77c" /><circle cx="14.200" cy="1.800" r="1.400" fill="#bfa77c" /><circle cx="1.800" cy="14.200" r="1.400" fill="#d0a75c" /><circle cx="14.200" cy="14.200" r="1.400" fill="#bfa77c" />
        </svg>
        <TitleText>yarb - Proteus 8 Professional - Schematic Capture</TitleText>
        <WindowButtons>
          <svg width="11" height="11"><path d="M.5 5.500H10.500" stroke="#000" /></svg>
          <svg width="11" height="11"><path d="M.5 2.500H8.500V10.500H.5ZM2.500 2.500V.5H10.500V8.500H8.500" fill="none" stroke="#000" /></svg>
          <svg width="11" height="11"><path d="M.5 .5L10.500 10.500M10.500 .5L.5 10.500" stroke="#000" strokeWidth="1.100" /></svg>
        </WindowButtons>
      </TitleBar>
      <MenuBar>{MENU.map(([m, w]) => <MenuItem key={m} $w={w}>{m}</MenuItem>)}</MenuBar>
      <ToolbarRow>
        <ToolGroup $w={338} $gap={4} $pad={10}><Tools items={TOP_TOOLS.project} /></ToolGroup>
        <ToolGroup $w={112} $gap={5} $pad={11}>
          <DesignSelect>Base Design<svg width="9" height="6"><path d="M.5 .5L4.500 4.500L8.500 .5" fill="none" stroke="#444" /></svg></DesignSelect>
        </ToolGroup>
        <ToolGroup $w={206} $gap={4} $pad={11}><Tools items={TOP_TOOLS.view} /></ToolGroup>
        <ToolGroup $w={324} $gap={4} $pad={11}><Tools items={TOP_TOOLS.edit} /></ToolGroup>
        <ToolGroup $w={192} $gap={0} $pad={11}><Tools items={TOP_TOOLS.design} /></ToolGroup>
      </ToolbarRow>
      <TabRow>
        <Tab>
          <TabShape width="179" height="25" viewBox="0 0 179 25">
            <defs><linearGradient id="tab" x2="0" y2="1"><stop stopColor="#edf6fb" /><stop offset="1" stopColor="#b9dbec" /></linearGradient></defs>
            <path d="M0 25V22L22 .5H178.500V25" fill="url(#tab)" stroke="#70a0bd" />
          </TabShape>
          <Icon name="schem" size={14} />
          <TabName>Schematic Capture</TabName>
          <svg width="11" height="11"><path d="M.5 .5L10.500 10.500M10.500 .5L.5 10.500" stroke="#5f6468" strokeWidth="2" /></svg>
        </Tab>
        <TabFill />
      </TabRow>
      <Strip />
      <Workspace>
        <VerticalTools $w={26} $h={484} $ml={2}><Tools items={MODES} vertical /></VerticalTools>
        <VerticalTools $w={25} $h={124} $ml={4}>
          <Tools items={['cw', 'ccw']} vertical />
          <AngleField>0°</AngleField>
          <VDivider $h={9} />
          <Tools items={['flipH', 'flipV']} vertical />
        </VerticalTools>
        <PanelColumn>
          <Overview><MiniMap /></Overview>
          <Devices>
            <DevicesHead><LetterButton>P</LetterButton><LetterButton>L</LetterButton><DevicesTitle>DEVICES</DevicesTitle></DevicesHead>
            <DeviceList>{DEVICES.map((d, i) => <Device key={d} $on={i === 0}>{d}</Device>)}</DeviceList>
          </Devices>
        </PanelColumn>
        <CanvasArea>
          <Schematic />
          <VarWindow>
            <VarTitle>CM3 Variables - U1<VarClose>x</VarClose></VarTitle>
            <VarTable>
              <VarHead>
                {['Name', 'Address', 'Value'].map(h => <VarHeadCell key={h}><Wide $by={1.163}>{h}</Wide></VarHeadCell>)}
              </VarHead>
              {Array.from({ length: 17 }, (_, r) => {
                const row = VARS[r] || [];
                const by = r === 2 ? 1.32 : 1.163;
                return (
                  <VarRow key={r} $changed={r === 2}>
                    {[0, 1, 2].map(c => (
                      <VarCell key={c} $first={c === 0}>
                        {r === 0 && c === 0 && <Expand />}
                        {row[c] && <Wide $by={by}>{row[c]}</Wide>}
                      </VarCell>
                    ))}
                  </VarRow>
                );
              })}
            </VarTable>
          </VarWindow>
        </CanvasArea>
        <RightEdge />
      </Workspace>
      <StatusBar>
        <ToolGroup $w={258} $gap={5} $pad={10}>
          <StatusSlot $w={37}><svg width="8" height="15"><path d="M0 0L8 7.500L0 15Z" fill="#0b5cbd" stroke="#0a4a99" strokeWidth=".6" /></svg></StatusSlot>
          <StatusSlot $w={37}><svg width="12" height="15"><path d="M1 0V15" stroke="#0b5cbd" strokeWidth="2" /><path d="M4 0L12 7.500L4 15Z" fill="#0b5cbd" /></svg></StatusSlot>
          <StatusSlot $w={33}><svg width="8" height="15"><path d="M1.500 0V15M6.500 0V15" stroke="#cb5908" strokeWidth="3" /></svg></StatusSlot>
          <StatusSlot $w={39}><svg width="13" height="13"><rect x=".5" y=".5" width="12" height="12" fill="#1070d8" stroke="#0a4388" /></svg></StatusSlot>
          <Divider />
          <StatusSlot $w={27}>
            <svg width="13" height="13"><circle cx="6.500" cy="6.500" r="6.200" fill="#0f9a16" stroke="#064c0a" strokeWidth=".7" /><path d="M6.500 2V4.200M5 6H6.800V10M4.800 10.300H8.400" stroke="#fff" strokeWidth="1.600" fill="none" /></svg>
          </StatusSlot>
          <StatusText $ls={-0.7}>3 Message(s)</StatusText>
        </ToolGroup>
        <ToolGroup $w={412} $gap={5} $pad={13}><StatusText $ls={-0.56} $c="#7c4f20">PAUSED: 00:00:05.354694</StatusText></ToolGroup>
        <ToolGroup $w={686} $gap={0} $pad={11} />
      </StatusBar>
    </Frame>
  );
}
